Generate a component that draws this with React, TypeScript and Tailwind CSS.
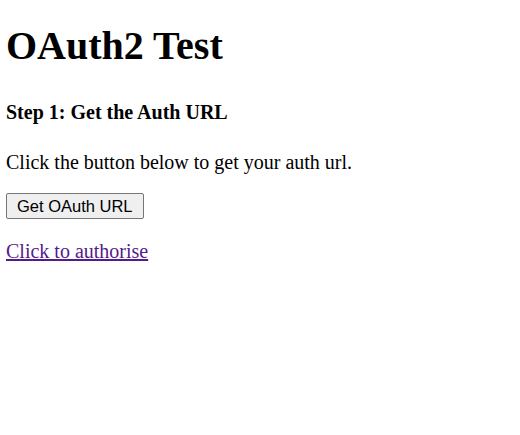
export default function App() {
  return (
    <div className="min-h-screen bg-white pl-[6px] text-black font-['Liberation_Serif',serif]">
      <h1 className="pt-[24px] text-[40px] leading-[44px] font-bold">OAuth2 Test</h1>
      <h4 className="mt-[33px] text-[20px] leading-[22px] font-bold">Step 1: Get the Auth URL</h4>
      <p className="mt-[28px] text-[20px] leading-[22px]">Click the button below to get your auth url.</p>
      <button
        type="button"
        className="mt-[20px] flex h-[26px] items-center rounded-[2px] border border-[#767676] bg-[#efefef] px-[10px] font-['Liberation_Sans',sans-serif] text-[16.5px] leading-none text-black"
      >
        Get OAuth URL
      </button>
      <a
        href="#"
        className="mt-[21px] block w-fit text-[20px] leading-[22px] text-[#551a8b] underline"
      >
        Click to authorise
      </a>
    </div>
  );
}
